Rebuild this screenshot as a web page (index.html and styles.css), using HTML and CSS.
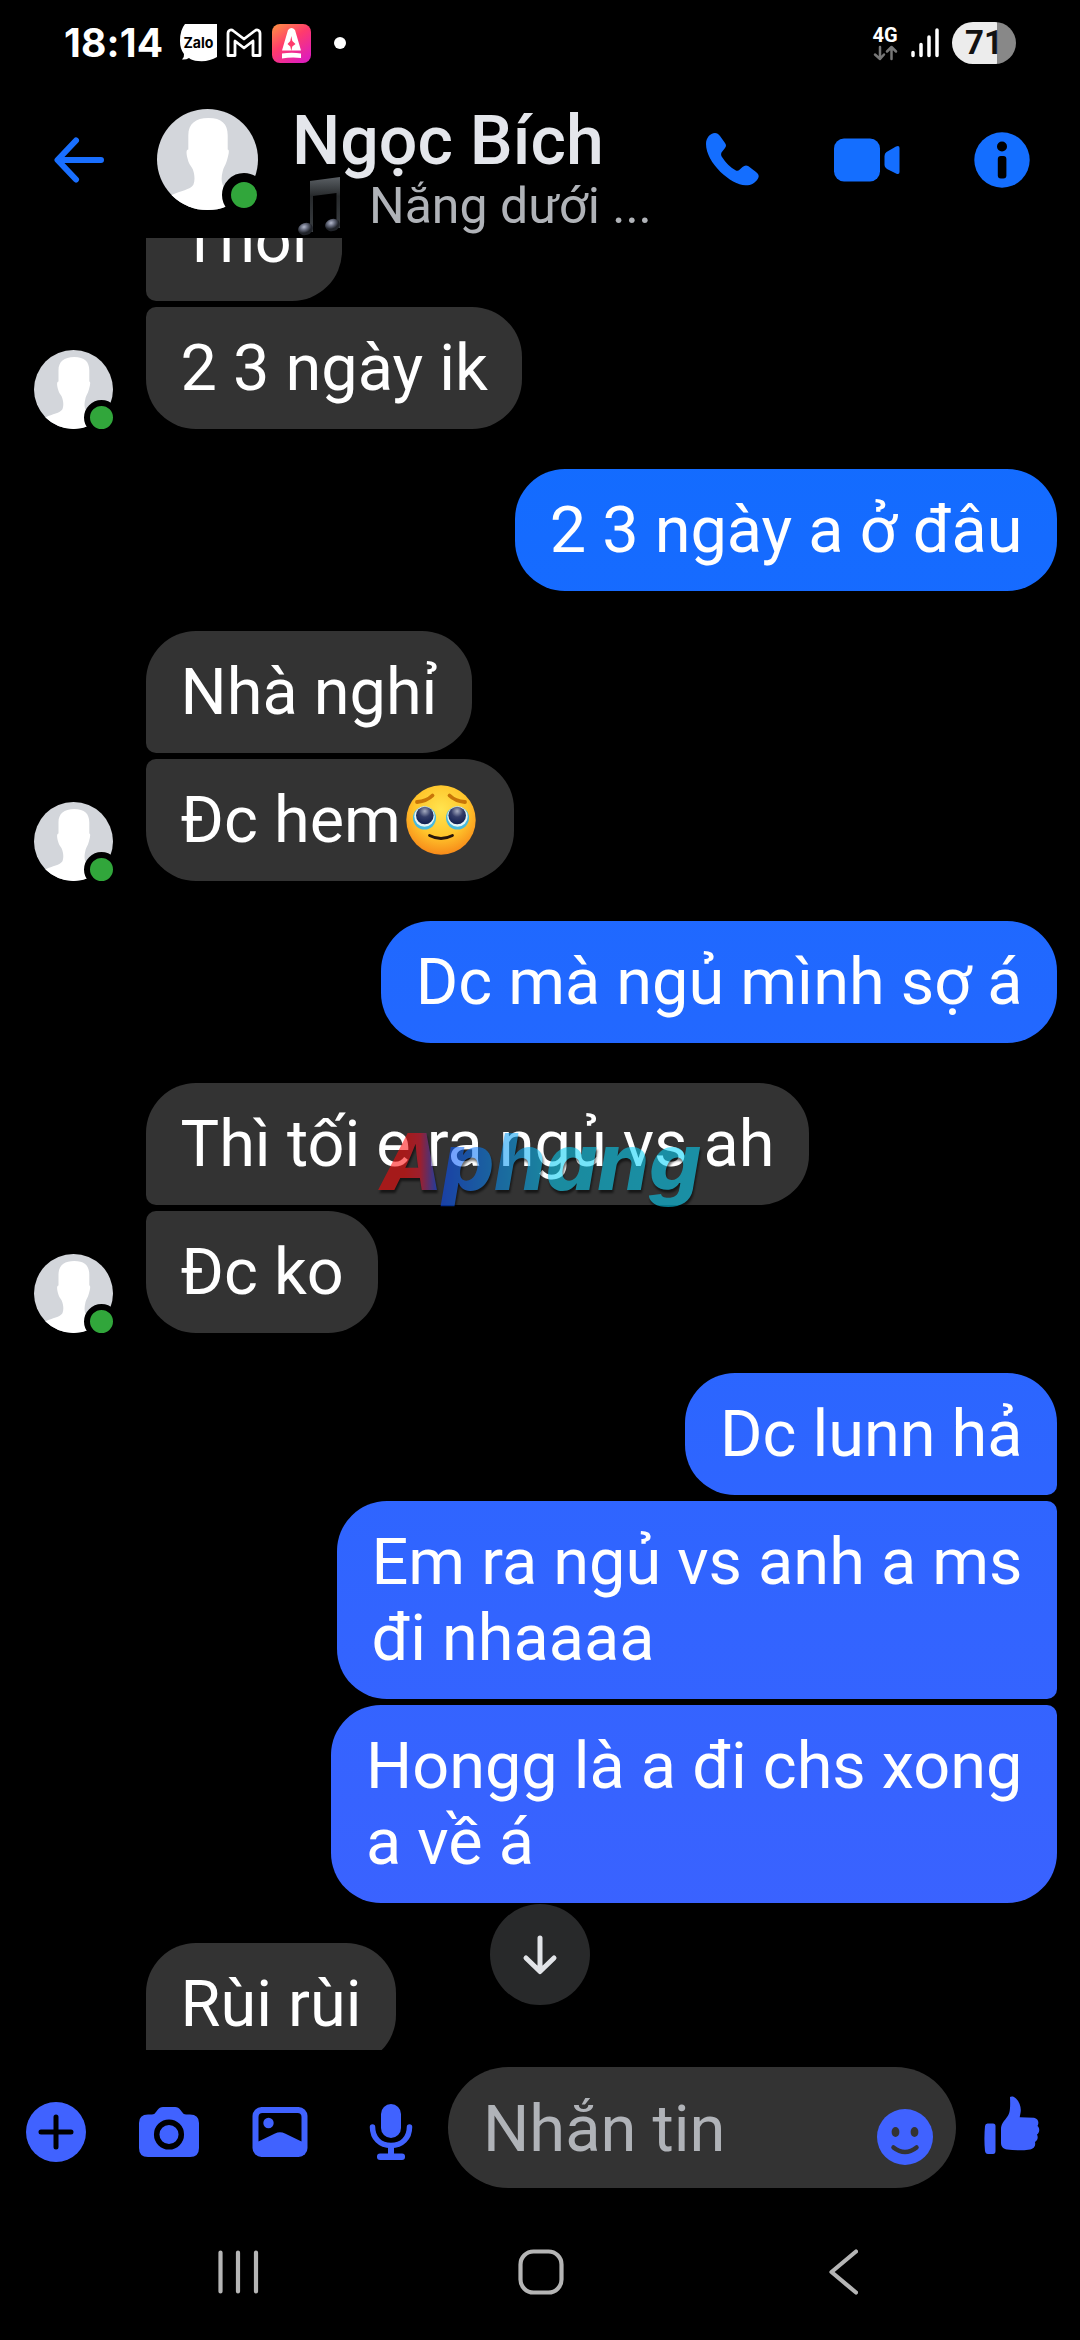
FILE: index.html
```html
<!DOCTYPE html>
<html lang="vi">
<head>
<meta charset="utf-8">
<title>Ngọc Bích</title>
<link rel="stylesheet" href="styles.css">
</head>
<body>
<svg class="defs" width="0" height="0" aria-hidden="true">
  <defs>
    <clipPath id="disc"><circle cx="50" cy="50" r="50"/></clipPath>
    <symbol id="person" viewBox="0 0 100 100">
      <g clip-path="url(#disc)">
        <rect width="100" height="100" fill="#d3d6db"/>
        <path fill="#fff" d="M31 40V26C31 15 38 9 51 9S70 15 70 26V40C72 40 71 45 69.500 50C68 56 66 57 65 62C63 70 64 76 68 79L100 92V100H0L15 85C23 81 33 80 36 75C38 70 37 64 35.500 60C34 56 32 56 30.500 50C29 45 28.500 40 31 40Z"/>
      </g>
    </symbol>
  </defs>
</svg>
<div class="phone">
  <div class="status">
    <span class="clock">18:14</span>
    <svg class="zalo" width="37" height="38" viewBox="0 0 37 38"><path fill="#fff" d="M5 0H37V33Q29 38 18 37Q12 36.500 9 34Q6 36 2 35.500Q4.500 33 4 30Q0 25 0 17Q0 6 5 0Z"/><text x="3.500" y="24" textLength="30" lengthAdjust="spacingAndGlyphs">Zalo</text></svg>
    <svg class="gmail" width="36" height="30" viewBox="0 0 36 30" fill="none" stroke="#fff" stroke-width="2.800" stroke-linejoin="round"><path d="M2 5.500C2 2 5 1 7.500 3L18 11L28.500 3C31 1 34 2 34 5.500V27.500H27V13L18 20L9 13V27.500H2Z"/></svg>
    <svg class="app" width="39" height="39" viewBox="0 0 39 39">
      <defs><linearGradient id="appfill" x1="0" y1="0" x2=".7" y2="1"><stop offset="0" stop-color="#ff9440"/><stop offset=".5" stop-color="#ff3b6c"/><stop offset="1" stop-color="#e01fb8"/></linearGradient></defs>
      <rect width="39" height="39" rx="8" fill="url(#appfill)"/>
      <path fill="#fff" d="M16 6Q19.500 2 23 6L29 26.500H10ZM10 29.500Q20 28 29 29.500V34Q19 33 10 34.500Z"/>
      <path fill="#ff3b6c" d="M19.300 12L20.300 17L23.500 20L20.300 22.500L19.300 27L18.300 22.500L15.500 20L18.300 17Z"/>
    </svg>
    <span class="more"></span>
    <div class="network"><span class="gen">4G</span>
      <svg width="25" height="16" viewBox="0 0 25 16" fill="none" stroke="#777" stroke-width="2.500" stroke-linecap="round" stroke-linejoin="round"><path d="M7 2V14M2 9.500L7 14L11 9.500M18.500 14V2M14 6.500L18.500 2L23 6.500"/></svg>
    </div>
    <svg class="signal" width="28" height="30" viewBox="0 0 28 30" stroke="#fff" stroke-width="3.500" stroke-linecap="round"><path d="M2 24.500V27.500M10 16.500V27.500M18 9V27.500M26 2V27.500"/></svg>
    <span class="battery">71</span>
  </div>

  <header class="top">
    <svg class="back" width="50" height="46" viewBox="0 0 50 46" fill="none" stroke="#196fff" stroke-width="6" stroke-linecap="round" stroke-linejoin="round"><path d="M22 3.500L3.500 23L22 42.500M5 23H47"/></svg>
    <div class="avatar big"><svg width="101" height="101"><use href="#person"/></svg><span class="online"></span></div>
    <div class="who">
      <h1 class="name">Ngọc Bích</h1>
      <div class="note">
        <svg width="44" height="60" viewBox="0 0 44 60">
          <defs><linearGradient id="beam" x1="0" y1="0" x2="0" y2="1"><stop offset="0" stop-color="#5b6065"/><stop offset=".35" stop-color="#26292b"/><stop offset="1" stop-color="#3a3e42"/></linearGradient>
          <radialGradient id="notehead" cx=".45" cy=".3"><stop offset="0" stop-color="#b4b9cc"/><stop offset=".5" stop-color="#656a7c"/><stop offset="1" stop-color="#202329"/></radialGradient></defs>
          <path fill="url(#beam)" d="M13 5L43 1V52H39.500V17L16 20V56H13Z"/>
          <ellipse cx="8.500" cy="53" rx="7.500" ry="6" fill="url(#notehead)" transform="rotate(-18 8.500 53)"/>
          <ellipse cx="35.500" cy="49" rx="7.500" ry="6" fill="url(#notehead)" transform="rotate(-18 35.500 49)"/>
        </svg>
        <span class="song">Nắng dưới ...</span>
      </div>
    </div>
    <div class="actions">
      <svg width="54" height="54" viewBox="0 0 54 54" fill="#146eff"><path d="M0 11C0 5 4 0 9 0C11 0 12.500 1 14 3L19 10C20.500 12 20.200 13.500 19 15L15.500 19.500C14.800 21 15 22.500 16 24C20 30 24 34 29.500 37.300C31 38.200 32.500 38 33.500 36.800L36.500 34C38.500 32.200 40.500 32 42.500 33.300L50 39C52.500 41 53.500 43 52 45.500C49 50.500 44.500 52.500 39.500 52.300C25 52 0 30 0 11Z"/></svg>
      <svg width="66" height="44" viewBox="0 0 66 44" fill="#146eff"><rect width="46" height="43" y=".5" rx="10"/><path d="M50.500 18Q50.500 15.500 52.500 14L62 8.500Q65.500 7 65.500 10V34Q65.500 37 62 35.500L53 31Q50.500 29.500 50.500 27Z"/></svg>
      <svg width="56" height="56" viewBox="0 0 56 56"><circle cx="28" cy="28" r="27.700" fill="#146eff"/><circle cx="28" cy="14.500" r="5"/><rect x="23.800" y="24" width="8.600" height="22.500" rx="3"/></svg>
    </div>
  </header>

  <main class="thread">
    <section class="group theirs first">
      <div class="avatar small"><svg width="79" height="79"><use href="#person"/></svg><span class="online"></span></div>
      <div class="stack"><p class="bubble">Thôi</p><p class="bubble">2 3 ngày ik</p></div>
    </section>
    <section class="group mine"><p class="bubble">2 3 ngày a ở đâu</p></section>
    <section class="group theirs">
      <div class="avatar small"><svg width="79" height="79"><use href="#person"/></svg><span class="online"></span></div>
      <div class="stack"><p class="bubble">Nhà nghỉ</p>
      <p class="bubble">Đc hem<svg class="emoji" width="70" height="70" viewBox="0 0 70 70">
        <defs><radialGradient id="face" cx=".5" cy=".35" r=".7"><stop offset="0" stop-color="#ffe44f"/><stop offset=".55" stop-color="#ffc52b"/><stop offset="1" stop-color="#f67f16"/></radialGradient>
        <radialGradient id="iris" cx=".5" cy=".25" r=".75"><stop offset="0" stop-color="#a5abc0"/><stop offset=".45" stop-color="#343d68"/><stop offset="1" stop-color="#101e50"/></radialGradient></defs>
        <circle cx="35" cy="35" r="34.700" fill="url(#face)"/>
        <circle cx="18.500" cy="33" r="11.500" fill="#48b9dd"/><circle cx="51.500" cy="33" r="11.500" fill="#48b9dd"/>
        <circle cx="18.500" cy="31.500" r="10.200" fill="#e6f5f5"/><circle cx="51.500" cy="31.500" r="10.200" fill="#e6f5f5"/>
        <circle cx="18.800" cy="30.500" r="8.800" fill="url(#iris)"/><circle cx="51.200" cy="30.500" r="8.800" fill="url(#iris)"/>
        <path d="M11 17Q21 16 26.500 10.500M43.500 10.500Q49 16 59 17" fill="none" stroke="#c87508" stroke-width="3.800" stroke-linecap="round"/>
        <path d="M23.500 50.500Q35 56.500 46.500 50.500" fill="none" stroke="#27160b" stroke-width="2.800" stroke-linecap="round"/>
      </svg></p></div>
    </section>
    <section class="group mine"><p class="bubble">Dc mà ngủ mình sợ á</p></section>
    <section class="group theirs">
      <div class="avatar small"><svg width="79" height="79"><use href="#person"/></svg><span class="online"></span></div>
      <div class="stack"><p class="bubble">Thì tối e ra ngủ vs ah</p><p class="bubble">Đc ko</p></div>
    </section>
    <section class="group mine">
      <p class="bubble">Dc lunn hả</p>
      <p class="bubble">Em ra ngủ vs anh a ms<br>đi nhaaaa</p>
      <p class="bubble">Hongg là a đi chs xong<br>a về á</p>
    </section>
    <section class="group theirs open">
      <div class="stack"><p class="bubble">Rùi rùi</p><p class="bubble">&nbsp;</p></div>
    </section>
    <svg class="watermark" width="340" height="100" viewBox="0 0 340 100">
      <defs><linearGradient id="mark" gradientUnits="userSpaceOnUse" x1="0" y1="0" x2="330" y2="0"><stop offset=".1" stop-color="#ff0808"/><stop offset=".145" stop-color="#f01028"/><stop offset=".2" stop-color="#0748ff"/><stop offset=".38" stop-color="#0890f4"/><stop offset=".56" stop-color="#08d0f4"/><stop offset="1" stop-color="#08d8ff"/></linearGradient></defs>
      <text class="mark" x="8" y="70" textLength="321" lengthAdjust="spacingAndGlyphs" fill="url(#mark)">Aphang</text>
    </svg>
    <div class="jump"><svg width="36" height="42" viewBox="0 0 36 42" fill="none" stroke="#e2e4e8" stroke-width="5" stroke-linecap="round" stroke-linejoin="round"><path d="M18 4V37M4 24L18 37.500L32 24"/></svg></div>
  </main>

  <footer class="composer">
    <div class="tools">
      <svg width="60" height="60" viewBox="0 0 60 60"><circle cx="30" cy="30" r="30" fill="#4062ff"/><path d="M30 15V45M15 30H45" stroke="#000" stroke-width="5" stroke-linecap="round"/></svg>
      <svg width="60" height="50" viewBox="0 0 60 50"><path fill="#4062ff" d="M9 7.500H13Q15.500 7.500 17 5L18.500 3Q20.500 0 24 0H36Q39.500 0 41.500 3L43 5Q44.500 7.500 47 7.500H51Q60 7.500 60 16V41Q60 50 51 50H9Q0 50 0 41V16Q0 7.500 9 7.500Z"/><circle cx="30" cy="27.500" r="12.300" fill="#4062ff" stroke="#000" stroke-width="5.500"/></svg>
      <svg width="56" height="50" viewBox="0 0 56 50"><rect width="55" height="50" x=".5" rx="9" fill="#4062ff"/><path d="M6.500 10Q6.500 6 10.500 6H45.500Q49.500 6 49.500 10V34.500L33 26.500Q28 24 23 26.500L6.500 34.500Z"/><circle cx="16.500" cy="16" r="5.200" fill="#4062ff"/></svg>
      <svg class="mic" width="44" height="56" viewBox="0 0 44 56"><rect x="12" width="20" height="34" rx="10" fill="#4062ff"/><path d="M3.500 23C3.500 34 11 41.500 22 41.500S40.500 34 40.500 23" fill="none" stroke="#4062ff" stroke-width="5.500" stroke-linecap="round"/><path d="M22 42V50" stroke="#4062ff" stroke-width="6"/><rect x="8" y="49.500" width="28" height="6.500" rx="3" fill="#4062ff"/></svg>
    </div>
    <div class="field"><span>Nhắn tin</span>
      <svg width="56" height="56" viewBox="0 0 56 56"><circle cx="28" cy="28" r="28" fill="#4062ff"/><ellipse cx="18.500" cy="23" rx="3.900" ry="5" fill="#333"/><ellipse cx="37.500" cy="23" rx="3.900" ry="5" fill="#333"/><path d="M16.500 38.500Q28 47.500 39.500 38.500" fill="none" stroke="#333" stroke-width="4.500" stroke-linecap="round"/></svg>
    </div>
    <svg class="like" width="56" height="59" viewBox="0 0 56 59" fill="#4062ff"><path d="M3.500 27.500H9Q11.500 27.500 11.500 30V55Q11.500 58 9 58H4Q1.500 58 1 55Q-.2 43 1 30Q1.300 27.500 3.500 27.500ZM26 1C27 0 30 0 32 2.500C36 6.500 37.500 12 36.500 17L35.700 21.300L50 21.800C54 22.500 55.500 26.500 53.500 30C56 32 55.800 36.500 53 38.500C54.500 41.500 53.500 44.500 51 46C52 50 49.500 53 46 53.500C38 54.700 30 54.500 23 53.500C19.500 53 17 50.500 17 47V33C17 28.500 19.500 25.500 22 22.500C26 18 26.500 14 26 1Z"/></svg>
  </footer>

  <nav class="keys">
    <svg width="42" height="46" viewBox="0 0 42 46" stroke="#b5b5b5" stroke-width="4.200" stroke-linecap="round"><path d="M3.500 3.500V42.500M21 3.500V42.500M39 3.500V42.500"/></svg>
    <svg class="home" width="46" height="46" viewBox="0 0 46 46" fill="none" stroke="#b5b5b5" stroke-width="4.200"><rect x="2.500" y="2.500" width="41" height="41" rx="13"/></svg>
    <svg width="30" height="46" viewBox="0 0 30 46" fill="none" stroke="#b5b5b5" stroke-width="4.200" stroke-linecap="round" stroke-linejoin="round"><path d="M28 2.500L3.500 23L28 43.500"/></svg>
  </nav>
</div>
</body>
</html>
```
FILE: styles.css
```css
* { box-sizing: border-box; }
body { margin: 0; background: #000; color: #fff; font-family: Roboto, "Noto Sans", sans-serif; }
svg { display: block; flex: none; }
.defs { position: absolute; }
h1, p { margin: 0; font-weight: 400; }
.phone { width: 1080px; height: 2340px; display: flex; flex-direction: column; overflow: hidden; }

.status { height: 86px; display: flex; align-items: center; padding: 0 64px 0 64px; flex: none; }
.clock { width: 116px; font: 700 39px/46px Inter, sans-serif; letter-spacing: .2px; }
.zalo text { font: 700 15px Inter, sans-serif; fill: #000; }
.gmail { margin-left: 9px; }
.app { margin-left: 10px; }
.more { width: 12px; height: 12px; border-radius: 50%; background: #fff; margin-left: 23px; }
.network { margin-left: auto; width: 26px; display: flex; flex-direction: column; align-items: center; gap: 1px; }
.gen { font: 700 20px/18px Roboto, sans-serif; }
.signal { margin-left: 13px; }
.battery { margin-left: 13px; width: 64px; height: 42px; border-radius: 21px; background: linear-gradient(90deg, #ececec 45px, #888 45px); color: #111; font: 700 33px/42px Roboto, sans-serif; text-align: center; }

.top { height: 152px; flex: none; display: flex; align-items: flex-start; padding-left: 54px; }
.back { margin-top: 51px; }
.avatar { position: relative; border-radius: 50%; }
.avatar.big { margin: 23px 0 0 53px; width: 101px; height: 101px; }
.avatar.small { margin-right: 33px; width: 79px; height: 79px; }
.online { position: absolute; border-radius: 50%; background: #31a63b; border: solid #000; }
.big .online { width: 44px; height: 44px; border-width: 9px; right: -8px; bottom: -7px; }
.small .online { width: 35px; height: 35px; border-width: 6px; right: -6px; bottom: -6px; }
.who { margin: 17px 0 0 34px; width: 366px; }
.name { font-size: 68px; line-height: 76px; font-weight: 500; color: #e4e6eb; white-space: nowrap; }
.note { display: flex; margin-top: -3px; padding-left: 5px; }
.song { margin-left: 28px; font-size: 50px; line-height: 60px; color: #b0b3b8; white-space: nowrap; }
.actions { flex: 1; display: flex; align-items: center; height: 148px; padding-right: 50px; justify-content: flex-end; gap: 74px; }

.thread { position: relative; height: 1812px; flex: none; overflow: hidden; display: flex; flex-direction: column; gap: 40px; }
.group { display: flex; flex: none; }
.first { margin-top: -59px; }
.theirs { align-items: flex-end; padding-left: 34px; }
.open { padding-left: 146px; }
.mine { flex-direction: column; align-items: flex-end; gap: 6px; padding-right: 23px; }
.stack { display: flex; flex-direction: column; align-items: flex-start; gap: 6px; }
.bubble { padding: 23px 34.5px; border-radius: 50px; font-size: 64.8px; line-height: 76px; white-space: nowrap; }
.theirs .bubble { background: #333; }
.theirs .bubble:not(:last-child) { border-bottom-left-radius: 10px; }
.theirs .bubble:not(:first-child) { border-top-left-radius: 10px; }
.mine .bubble { background: linear-gradient(#0d6dff, #0d6dff 238px, #3f61ff 2100px) fixed; }
.mine .bubble:not(:last-child) { border-bottom-right-radius: 10px; }
.mine .bubble:not(:first-child) { border-top-right-radius: 10px; }
.emoji { display: inline-block; vertical-align: -13px; margin: -10px 4px 0 5px; }

.watermark { position: absolute; left: 372px; top: 882px; opacity: .56; }
.mark { font: italic 800 78px Inter, sans-serif; filter: drop-shadow(1px 3px 1px #000); }
.jump { position: absolute; left: 490px; top: 1666px; width: 100px; height: 101px; border-radius: 50%; background: #28292a; display: flex; align-items: center; justify-content: center; }

.composer { height: 164px; flex: none; display: flex; align-items: center; padding-left: 26px; }
.tools { width: 422px; display: flex; align-items: center; gap: 53px; }
.mic { margin-left: 8px; }
.field { width: 508px; height: 121px; margin-top: -9px; border-radius: 61px; background: #333; display: flex; align-items: center; justify-content: space-between; padding: 3px 23px 0 35px; color: #b0b3b8; font-size: 65px; line-height: 76px; }
.field svg { margin-top: 16px; }
.like { margin: -14px 0 0 28px; }
.keys { flex: 1; display: flex; align-items: center; justify-content: space-between; padding: 0 222px 10px 217px; }
.home { margin-right: 6px; }
```
